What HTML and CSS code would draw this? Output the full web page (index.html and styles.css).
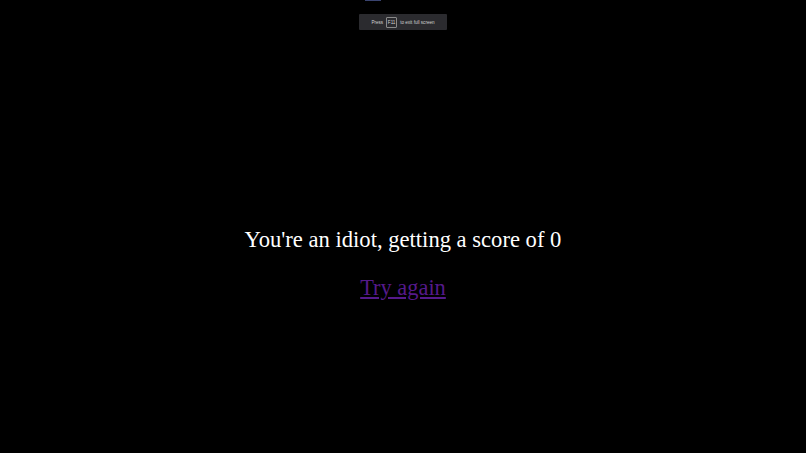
FILE: index.html
```html
<!DOCTYPE html>
<html>
<head>
<meta charset="utf-8">
<link rel="stylesheet" href="styles.css">
</head>
<body>
<div class="topline"></div>
<div class="toast">Press <span class="key">F11</span> to exit full screen</div>
<main class="content">
  <h1 class="title">You're an idiot, getting a score of 0</h1>
  <a class="again" href="#">Try again</a>
</main>
</body>
</html>
```
FILE: styles.css
```css
html, body {
  margin: 0;
  padding: 0;
  background: #000;
  height: 100%;
}
body {
  font-family: "Liberation Serif", "Times New Roman", serif;
  color: #fff;
  overflow: hidden;
}
.topline {
  position: absolute;
  top: 0;
  left: 365px;
  width: 16px;
  height: 1px;
  background: #3a4470;
}
.toast {
  position: absolute;
  top: 14px;
  left: 359px;
  width: 88px;
  height: 16px;
  background: #2b2b2f;
  color: #d0d0d0;
  font-family: "Liberation Sans", Arial, sans-serif;
  font-size: 4.6px;
  display: flex;
  align-items: center;
  justify-content: center;
  gap: 3px;
  border-radius: 1px;
}
.key {
  border: 1px solid #8a8a8a;
  border-radius: 1px;
  width: 9px;
  height: 9px;
  display: flex;
  align-items: center;
  justify-content: center;
}
.content {
  height: 100%;
  display: flex;
  flex-direction: column;
  align-items: center;
  padding-top: 226px;
  box-sizing: border-box;
}
.title {
  margin: 0;
  font-size: 22.6px;
  font-weight: normal;
  line-height: 28px;
}
.again {
  margin-top: 20px;
  font-size: 22.4px;
  color: #551a8b;
  line-height: 28px;
}
```
